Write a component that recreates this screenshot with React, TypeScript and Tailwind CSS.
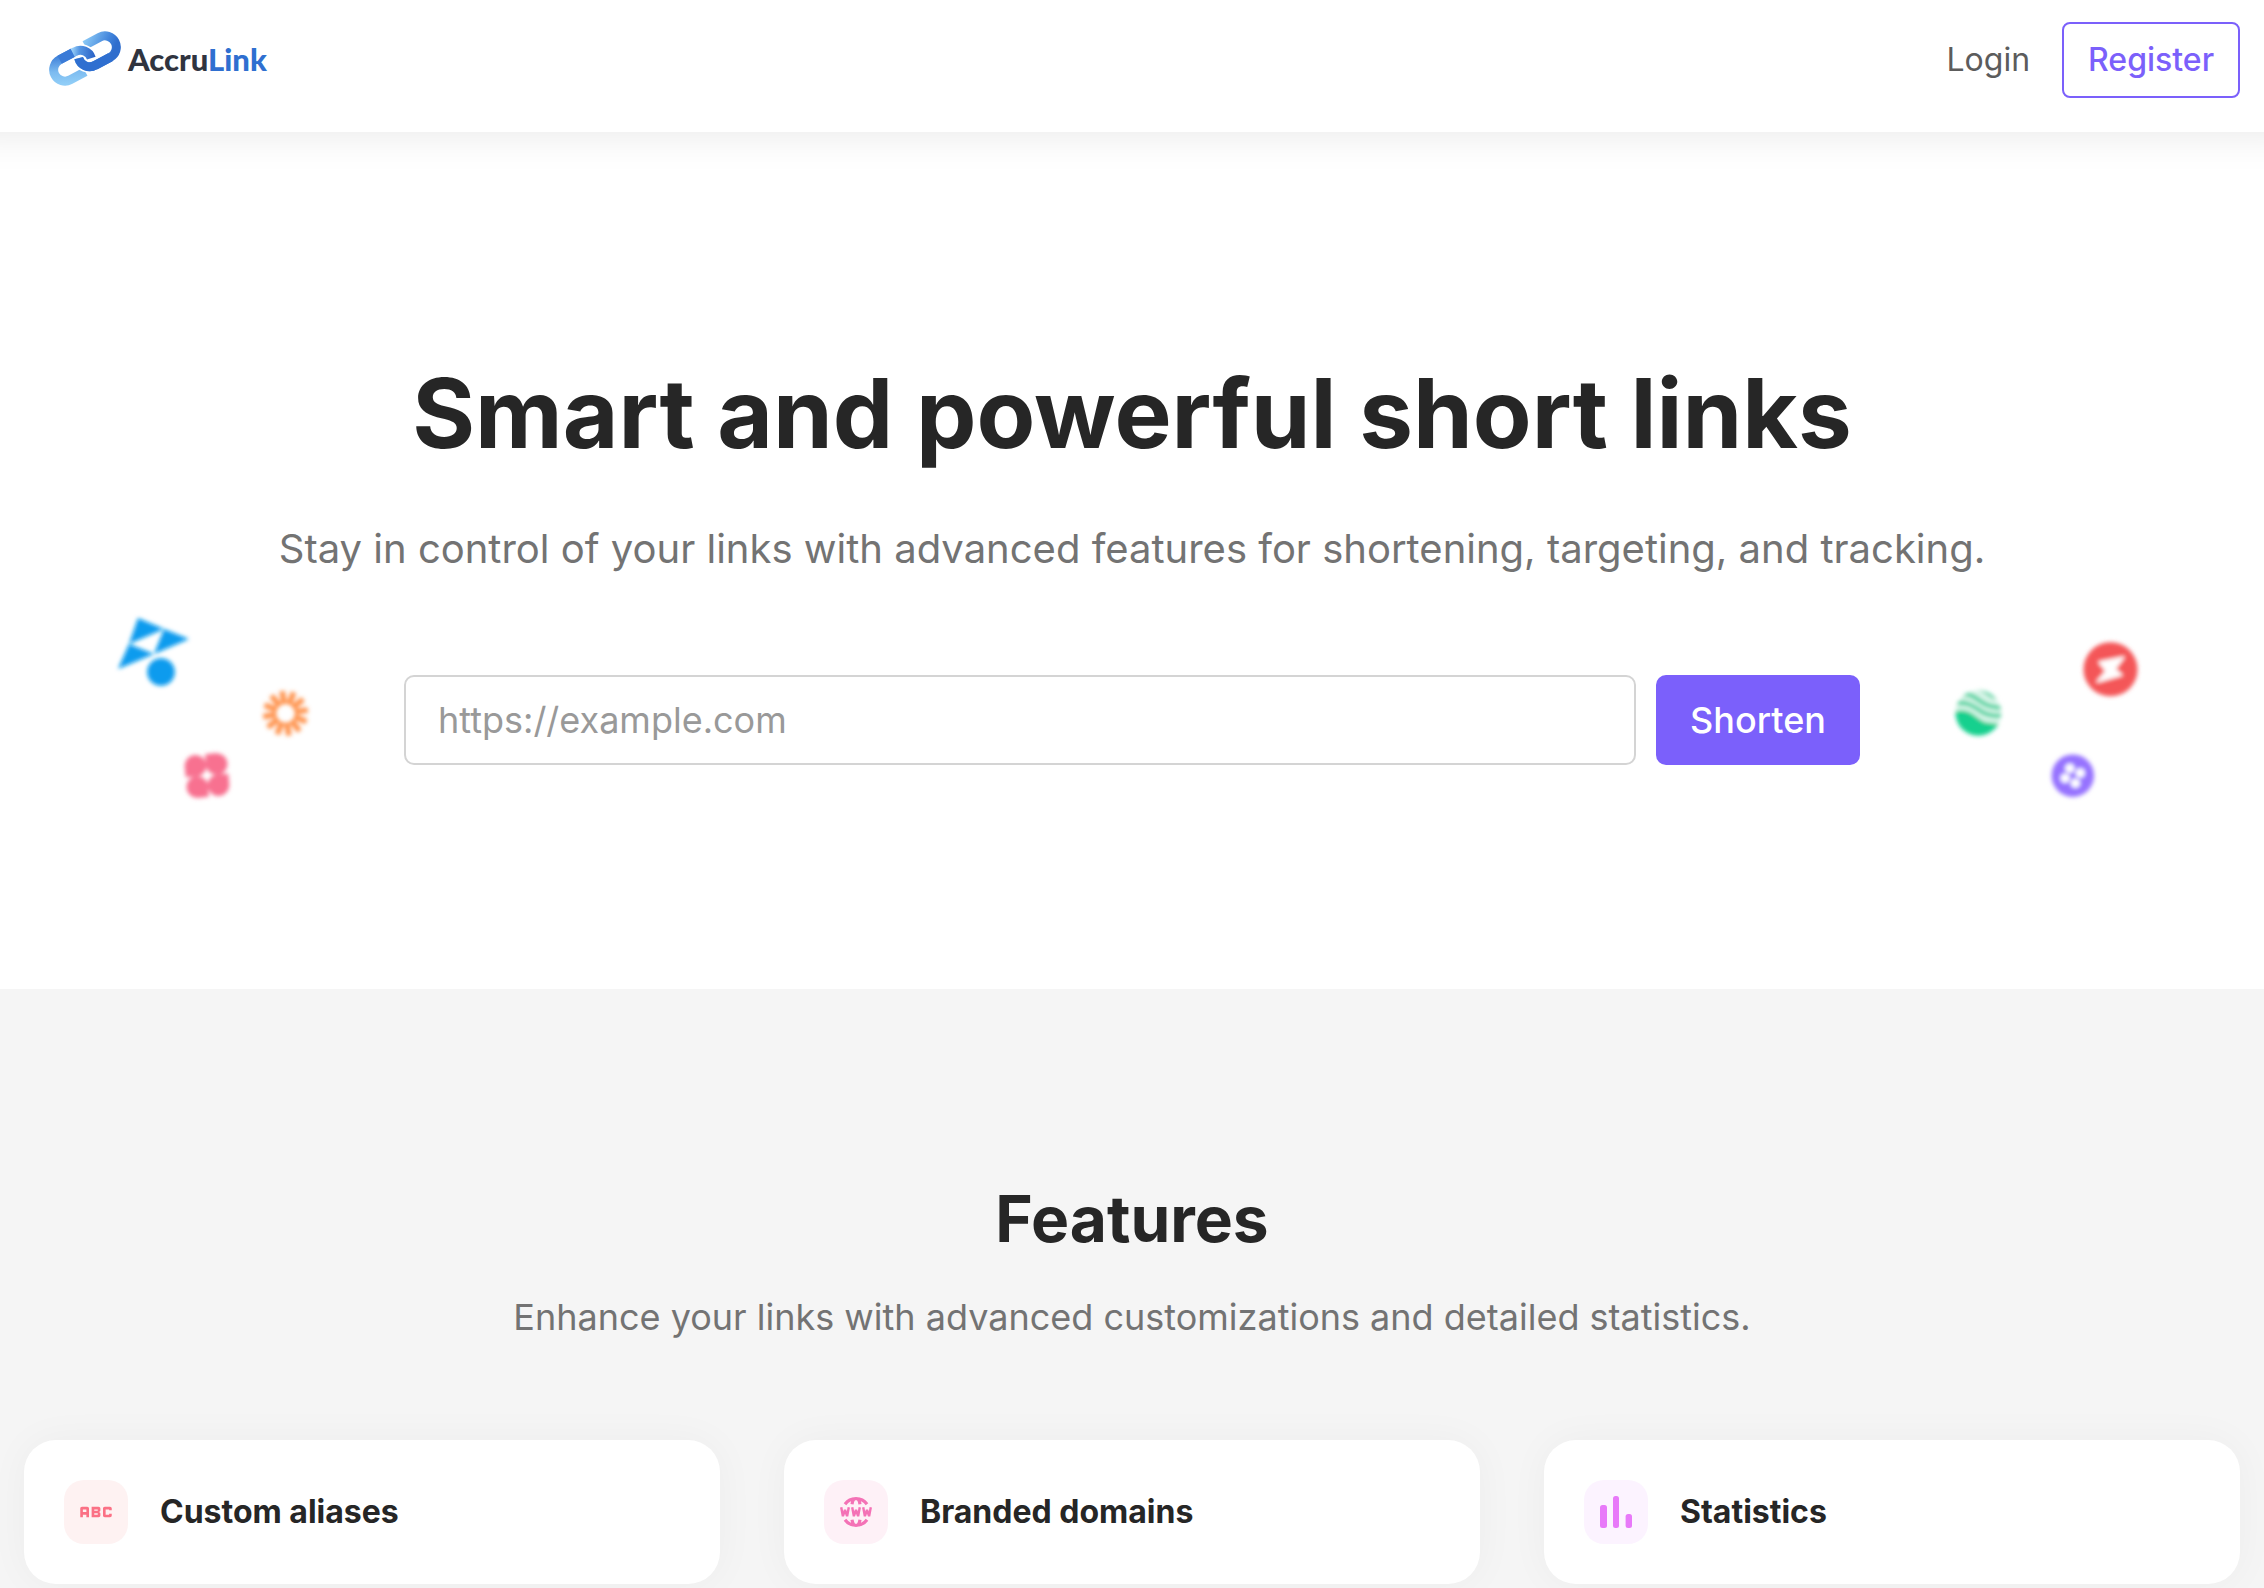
import type { ReactNode } from 'react';
import { useState } from 'react';
import { MdAbc } from 'react-icons/md';

interface Feature {
  title: string;
  tile: string;
  icon: ReactNode;
}

const features: Feature[] = [
  {
    title: 'Custom aliases',
    tile: 'bg-[#fef2f2] text-[#fb7185]',
    icon: <MdAbc className="h-[42px] w-[42px]" />,
  },
  {
    title: 'Branded domains',
    tile: 'bg-[#fef1f7] text-[#f472b6]',
    icon: (
      <svg viewBox="0 0 32 32" className="h-8 w-8" fill="none" stroke="currentColor" aria-hidden="true">
        <g strokeWidth="3.2">
          <path d="M5 8.300 A13.500 13.500 0 0 1 27 8.300" />
          <path d="M5 23.700 A13.500 13.500 0 0 0 27 23.700" />
          <path d="M14 2.500 Q12.500 5 12 8.300 M18 2.500 Q19.500 5 20 8.300" />
          <path d="M14 29.500 Q12.500 27 12 23.700 M18 29.500 Q19.500 27 20 23.700" />
        </g>
        <g strokeWidth="2.400" strokeLinejoin="bevel">
          <path d="M1.200 11.200 L2.900 20.200 L5 14 L7.100 20.200 L8.800 11.200" />
          <path d="M12.200 11.200 L13.900 20.200 L16 14 L18.100 20.200 L19.800 11.200" />
          <path d="M23.200 11.200 L24.900 20.200 L27 14 L29.100 20.200 L30.800 11.200" />
        </g>
      </svg>
    ),
  },
  {
    title: 'Statistics',
    tile: 'bg-[#fcf3ff] text-[#e879f9]',
    icon: (
      <svg viewBox="0 0 32 32" className="h-8 w-8" fill="currentColor" aria-hidden="true">
        <rect x="0" y="9" width="7" height="23" rx="2.5" />
        <rect x="13" y="0" width="6" height="32" rx="2.5" />
        <rect x="25.6" y="18" width="6.4" height="14" rx="2.5" />
      </svg>
    ),
  },
];

const rays = [0, 30, 60, 90, 120, 150, 180, 210, 240, 270, 300, 330];

function Logo() {
  return (
    <a href="/" className="flex h-[78px] items-center gap-[6px] pl-6">
      <svg viewBox="144 93 222 170" className="h-[57px] w-[74px]" fill="none" strokeWidth="27" aria-hidden="true">
        <defs>
          <linearGradient id="upper" gradientUnits="userSpaceOnUse" x1="255" y1="110" x2="340" y2="150">
            <stop offset="0" stopColor="#8ccaf6" />
            <stop offset="0.7" stopColor="#4386dc" />
            <stop offset="1" stopColor="#2f6dcd" />
          </linearGradient>
          <linearGradient id="lower" gradientUnits="userSpaceOnUse" x1="200" y1="250" x2="195" y2="160">
            <stop offset="0" stopColor="#90cdf7" />
            <stop offset="0.4" stopColor="#7cbbf0" />
            <stop offset="1" stopColor="#3879d6" />
          </linearGradient>
          <linearGradient id="hook" gradientUnits="userSpaceOnUse" x1="212" y1="160" x2="285" y2="165">
            <stop offset="0" stopColor="#a4d8fa" />
            <stop offset="0.35" stopColor="#5596e3" />
            <stop offset="1" stopColor="#2a62c6" />
          </linearGradient>
        </defs>
        <path d="M256 215 L211 239 A34 34 0 0 1 179 179 L226 154" stroke="url(#lower)" />
        <path d="M254 135 L299 111 A34 34 0 0 1 331 171 L286 195 A34 34 0 0 1 236 174" stroke="#fff" strokeWidth="37" />
        <path d="M254 135 L299 111 A34 34 0 0 1 331 171 L286 195 A34 34 0 0 1 236 174" stroke="url(#upper)" />
        <path d="M331 171 L286 195 A34 34 0 0 1 236 174" stroke="#2f6fd0" />
        <path d="M218 158 L224 155 A34 34 0 0 1 274 174" stroke="#fff" strokeWidth="36" />
        <path d="M179 179 L220 157" stroke="#3b7bd7" />
        <path d="M218 158 L224 155 A34 34 0 0 1 274 174" stroke="url(#hook)" />
      </svg>
      <span className="font-['Lato',sans-serif] text-[31px] leading-10 font-black text-[#30343f]">
        Accru<span className="text-[#2f6fd0]">Link</span>
      </span>
    </a>
  );
}

function LeftShapes() {
  return (
    <svg viewBox="0 0 240 220" className="absolute top-[468px] left-[100px] h-[220px] w-[240px]" aria-hidden="true">
      <filter id="soft">
        <feGaussianBlur stdDeviation="2" />
      </filter>
      <g filter="url(#soft)">
        <g fill="#089bee">
          <path d="M38 18 L64 29 L29 44 Z" />
          <path d="M64 29 L89 39 L54 54 Z" />
          <path d="M29 44 L54 54 L18 69 Z" />
          <circle cx="61" cy="72" r="13.8" />
        </g>
        <g transform="translate(185.5 113.3) rotate(-8.5)" stroke="#ff924c">
          {rays.map((angle) => (
            <path key={angle} d="M0 -10.5 V-22.5" strokeWidth="5.6" transform={`rotate(${angle})`} />
          ))}
          <circle r="11" fill="none" strokeWidth="3" />
        </g>
        <g transform="translate(107 175.5) rotate(-5)" fill="#f87190">
          <circle cx="-10.6" cy="-10.6" r="10.8" />
          <circle cx="10.6" cy="-10.6" r="10.8" />
          <circle cx="10.6" cy="10.6" r="10.8" />
          <circle cx="-10.6" cy="10.6" r="10.8" />
          <path d="M-21.4 -10.6 H-10.6 V0 H-21.4 Z" />
          <path d="M0 -21.4 H10.6 V-10.6 H0 Z" />
          <path d="M10.6 0 H21.4 V10.6 H10.6 Z" />
          <path d="M-10.6 10.6 H0 V21.4 H-10.6 Z" />
        </g>
      </g>
    </svg>
  );
}

function RightShapes() {
  return (
    <svg viewBox="0 0 240 200" className="absolute top-[488px] right-[94px] h-[200px] w-[240px]" aria-hidden="true">
      <clipPath id="globe">
        <circle cx="48.3" cy="93" r="22.8" />
      </clipPath>
      <g filter="url(#soft)">
        <circle cx="180.5" cy="49.3" r="27" fill="#f45659" />
        <path d="M169 42 L194 37 L185 49 L192 55 L167 62 L176 51 Z" fill="#fff" stroke="#fff" strokeWidth="1.5" strokeLinejoin="round" />
        <circle cx="142.8" cy="155.7" r="21.2" fill="#9672ff" />
        <g fill="#fff">
          <circle cx="139.8" cy="148.4" r="4.8" />
          <circle cx="150.2" cy="153" r="4.8" />
          <circle cx="135.2" cy="158.2" r="4.8" />
          <circle cx="145.4" cy="163.2" r="4.8" />
        </g>
        <g clipPath="url(#globe)">
          <rect x="24" y="68" width="50" height="50" fill="#dcf6eb" />
          <g fill="none" stroke="#4fd3a0" strokeWidth="4.6">
            <path d="M32 75 C44 72 50 84 60 86 S70 88 74 87" />
            <path d="M24 83.500 C42 80 48 92 58 94.500 S68 96 74 95" />
          </g>
          <path d="M46 70 C55 71 58 79 68 80 V66 H46 Z" fill="#4fd3a0" />
          <path d="M22 92 C42 85 46 101 58 102.500 S68 103 74 101 V120 H22 Z" fill="#17d08e" />
        </g>
      </g>
    </svg>
  );
}

export default function App() {
  const [url, setUrl] = useState('');

  return (
    <div className="flex min-h-screen flex-col overflow-x-clip bg-white font-['Inter',sans-serif] text-[#262626]">
      <header className="relative z-10 flex h-[132px] items-start justify-between bg-white px-6 shadow-[0_-40px_40px_40px_rgba(0,0,0,0.1)]">
        <div className="pt-5">
          <Logo />
        </div>
        <nav className="flex items-center gap-8 pt-[22px] text-[32px] leading-12">
          <a href="/login" className="text-[#5c5c5c]">
            Login
          </a>
          <a href="/register" className="rounded-lg border-2 border-[#7b60fb] px-6 py-3 font-medium text-[#7b60fb]">
            Register
          </a>
        </nav>
      </header>

      <main className="flex flex-1 flex-col">
        <section className="relative flex flex-col items-center px-6 pt-[223px] pb-[224px]">
          <LeftShapes />
          <RightShapes />
          <h1 className="text-center text-[96px] leading-[116px] font-bold">Smart and powerful short links</h1>
          <p className="mt-12 text-center text-[40px] leading-[60px] text-[#737373]">
            Stay in control of your links with advanced features for shortening, targeting, and tracking.
          </p>
          <form className="mt-24 flex w-full max-w-[1456px] gap-5" onSubmit={(e) => e.preventDefault()}>
            <input
              type="text"
              aria-label="Link to shorten"
              placeholder="https://example.com"
              value={url}
              onChange={(e) => setUrl(e.target.value)}
              className="h-[90px] min-w-0 flex-1 rounded-[10px] border-2 border-[#d4d4d4] bg-white px-8 text-[36px] outline-none placeholder:text-[#999999]"
            />
            <button type="submit" className="h-[90px] rounded-[10px] bg-[#7b60fb] px-[34px] text-[36px] font-medium text-white">
              Shorten
            </button>
          </form>
        </section>

        <section className="flex-1 overflow-hidden bg-[#f5f5f5] px-6 pt-48">
          <h2 className="text-center text-[64px] leading-[76px] font-bold">Features</h2>
          <p className="mt-[33px] text-center text-[36px] leading-[54px] text-[#737373]">
            Enhance your links with advanced customizations and detailed statistics.
          </p>
          <div className="mt-24 grid grid-cols-3 gap-16">
            {features.map((feature) => (
              <div key={feature.title} className="flex items-center gap-8 rounded-[32px] bg-white p-10 shadow-[0_0_40px_rgba(0,0,0,0.04)]">
                <div className={`flex h-16 w-16 items-center justify-center rounded-[20px] ${feature.tile}`}>{feature.icon}</div>
                <h3 className="text-[32px] leading-12 font-bold">{feature.title}</h3>
              </div>
            ))}
          </div>
        </section>
      </main>
    </div>
  );
}
